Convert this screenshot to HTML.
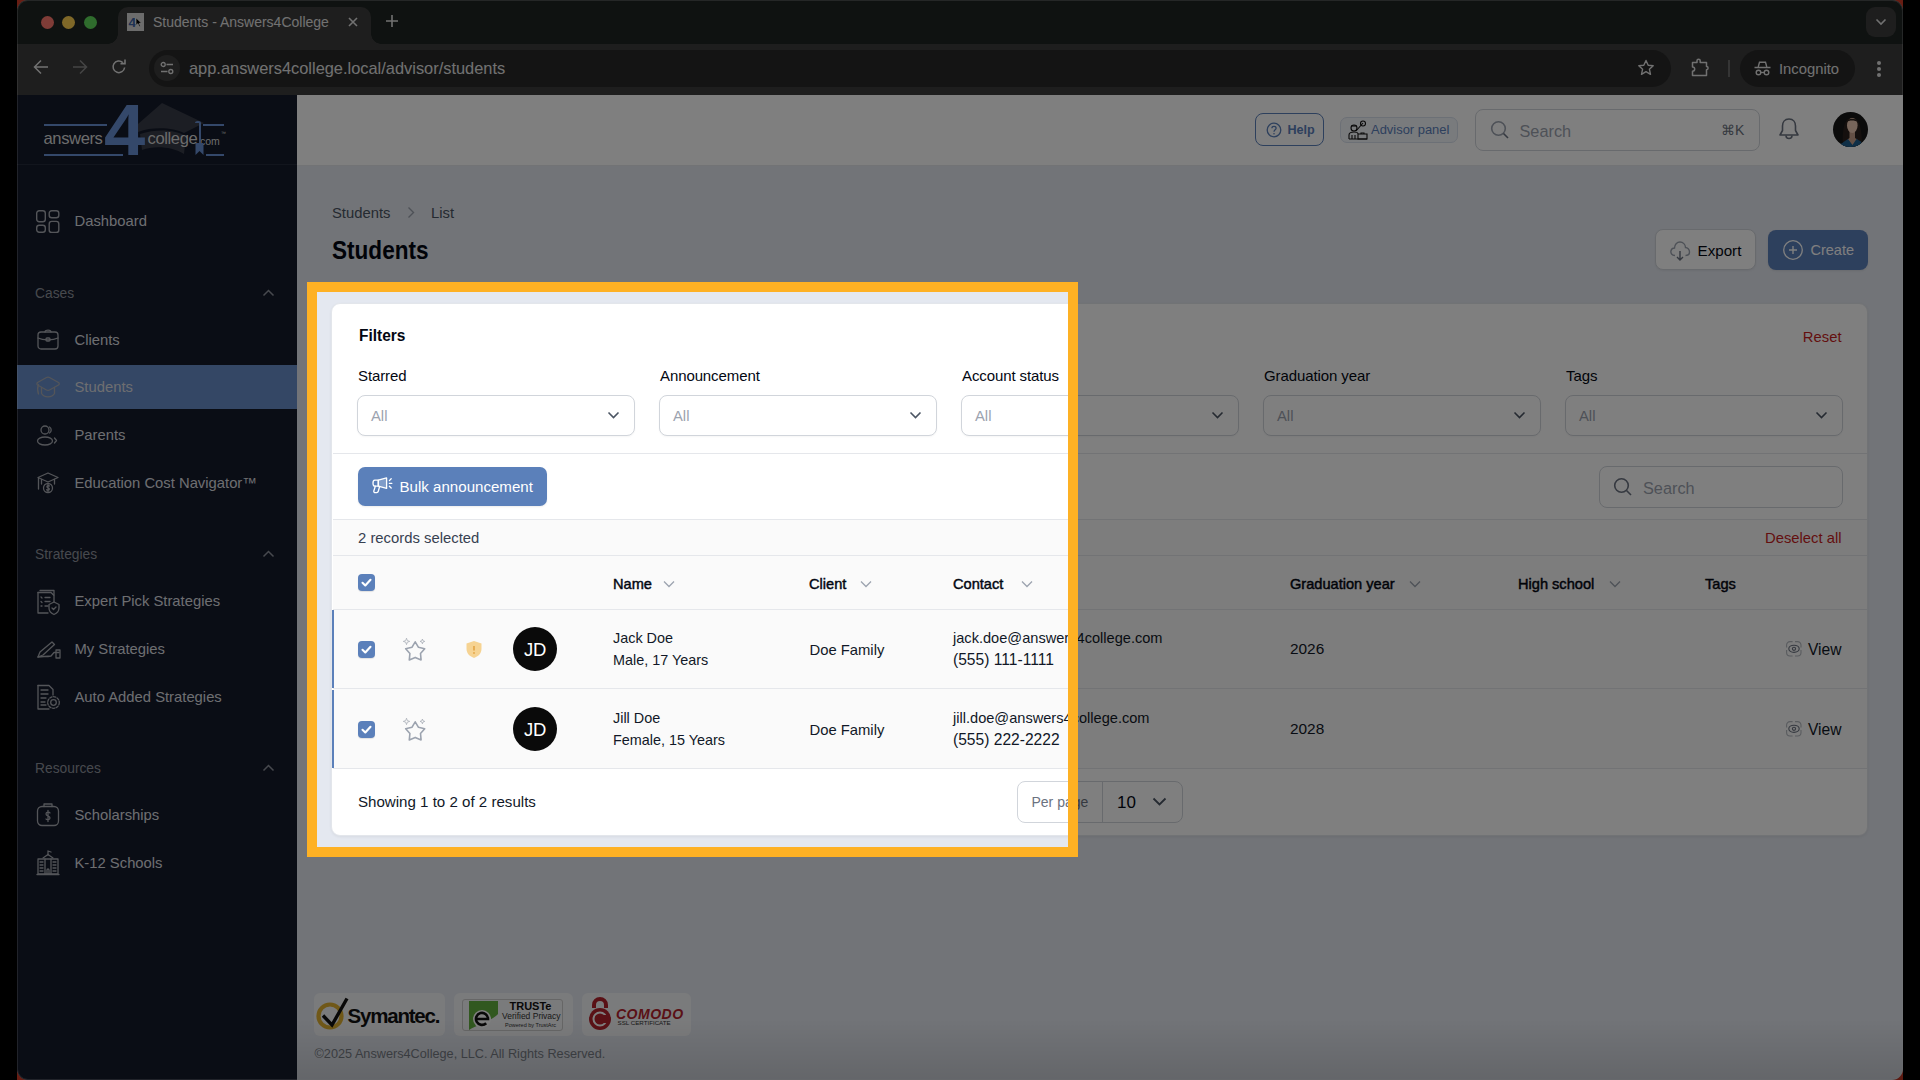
<!DOCTYPE html>
<html><head><meta charset="utf-8">
<style>
*{box-sizing:border-box;margin:0;padding:0}
html,body{width:1920px;height:1080px;overflow:hidden;background:#000;font-family:"Liberation Sans",sans-serif}
.abs{position:absolute}
.t{position:absolute;white-space:nowrap}
#win{position:absolute;left:0;top:0;width:1920px;height:1080px;clip-path:inset(0 17px 0 17px round 11px);background:#e4e8f0}
#tabs{position:absolute;left:0;top:0;width:1920px;height:44px;background:#1e2422}
.tl{position:absolute;top:15.5px;width:13px;height:13px;border-radius:50%}
#tab{position:absolute;left:118px;top:7px;width:253px;height:37px;background:#3c3c3c;border-radius:10px 10px 0 0}
.fl,.fr{position:absolute;bottom:0;width:10px;height:10px}
.fl{left:-10px;background:radial-gradient(circle at 0 0,transparent 9.5px,#3c3c3c 10px)}
.fr{right:-10px;background:radial-gradient(circle at 100% 0,transparent 9.5px,#3c3c3c 10px)}
#toolbar{position:absolute;left:0;top:44px;width:1920px;height:51px;background:#3c3c3c}
#omni{position:absolute;left:149px;top:6px;width:1522px;height:37px;border-radius:18.5px;background:#282828}
.ctext{color:#e3e3e3}
#hole{position:absolute;left:307px;top:282px;width:771px;height:575px;border:10px solid #feb124;box-shadow:0 0 0 3000px rgba(0,0,0,.5);z-index:50}
</style></head><body>
<div class="abs" style="left:17px;top:0;width:12px;height:12px;background:#d03a26"></div>
<div class="abs" style="left:1891px;top:0;width:12px;height:12px;background:#d03a26"></div>
<div class="abs" style="left:17px;top:1068px;width:12px;height:12px;background:#d03a26"></div>
<div class="abs" style="left:1891px;top:1068px;width:12px;height:12px;background:#d03a26"></div>
<div id="win">
<div id="tabs">
  <div class="tl" style="left:40.5px;background:#ff786e"></div>
  <div class="tl" style="left:61.5px;background:#ffd050"></div>
  <div class="tl" style="left:83.5px;background:#5ed85a"></div>
  <div id="tab"><i class="fl"></i><i class="fr"></i>
    <div class="abs" style="left:8.5px;top:6px;width:17.5px;height:18px;background:#d8d8d8"></div>
    <div class="abs" style="left:10.5px;top:8.5px;width:12px;height:14px;font:bold 13.5px 'Liberation Sans';color:#3b62a6;line-height:14px">4</div>
    <svg class="abs" style="left:17px;top:10px" width="8" height="11" viewBox="0 0 8 11"><path d="M1 0.8 L1 8.3 L2.9 6.7 L4.3 9.8 L5.5 9.3 L4.2 6.3 L6.7 6.3 Z" fill="#000" stroke="#fff" stroke-width=".7"/></svg>
    <div class="abs ctext" style="left:35px;top:6px;font-size:14px;line-height:18px;white-space:nowrap">Students - Answers4College</div>
    <svg class="abs" style="left:230px;top:10px" width="10" height="10" viewBox="0 0 10 10"><path d="M1 1L9 9M9 1L1 9" stroke="#e3e3e3" stroke-width="1.6"/></svg>
  </div>
  <svg class="abs" style="left:385px;top:14px" width="14" height="14" viewBox="0 0 14 14"><path d="M7 1V13M1 7H13" stroke="#e3e3e3" stroke-width="1.6"/></svg>
  <div class="abs" style="left:1866px;top:7px;width:30px;height:30px;border-radius:9px;background:#3c3c3c"></div>
  <svg class="abs" style="left:1875px;top:18px" width="12" height="8" viewBox="0 0 12 8"><path d="M1.5 1.5L6 6L10.5 1.5" stroke="#e3e3e3" stroke-width="1.6" fill="none"/></svg>
</div>
<div id="toolbar">
  <svg class="abs" style="left:33px;top:15px" width="16" height="16" viewBox="0 0 16 16"><path d="M15 8H2M8 1.5L1.5 8L8 14.5" stroke="#e3e3e3" stroke-width="1.5" fill="none"/></svg>
  <svg class="abs" style="left:72px;top:15px" width="16" height="16" viewBox="0 0 16 16"><path d="M1 8H14M8 1.5L14.5 8L8 14.5" stroke="#8a8a8a" stroke-width="1.5" fill="none"/></svg>
  <svg class="abs" style="left:111px;top:15px" width="16" height="16" viewBox="0 0 16 16"><path d="M13.6 8.5A5.8 5.8 0 1 1 11.8 3.6" stroke="#e3e3e3" stroke-width="1.5" fill="none"/><path d="M9.5 4.6H14V0.4" stroke="#e3e3e3" stroke-width="1.6" fill="none"/></svg>
  <div id="omni">
    <div class="abs" style="left:5px;top:5px;width:26px;height:26px;border-radius:50%;background:#3c3c3c"></div>
    <svg class="abs" style="left:11px;top:11px" width="14" height="14" viewBox="0 0 14 14"><circle cx="3.2" cy="3.5" r="2" stroke="#e3e3e3" stroke-width="1.3" fill="none"/><path d="M6.5 3.5H13" stroke="#e3e3e3" stroke-width="1.3"/><circle cx="10.8" cy="10.5" r="2" stroke="#e3e3e3" stroke-width="1.3" fill="none"/><path d="M1 10.5H7.5" stroke="#e3e3e3" stroke-width="1.3"/></svg>
    <div class="abs ctext" style="left:40px;top:8px;font-size:16.4px;line-height:20px;white-space:nowrap">app.answers4college.local/advisor/students</div>
    <svg class="abs" style="left:1488px;top:9px" width="18" height="18" viewBox="0 0 18 18"><path d="M9 1.5L11.2 6.3L16.2 6.8L12.4 10.2L13.5 15.3L9 12.7L4.5 15.3L5.6 10.2L1.8 6.8L6.8 6.3Z" stroke="#e3e3e3" stroke-width="1.4" fill="none" stroke-linejoin="round"/></svg>
  </div>
  <svg class="abs" style="left:1691px;top:14px" width="20" height="19" viewBox="0 0 20 19"><path d="M1.5 4.5H6V2.8A1.6 1.6 0 0 1 9.2 2.8V4.5H15.5V8.5A1.6 1.6 0 0 1 15.5 11.7V17.5H1.5V13.3A2.2 2.2 0 0 0 1.5 8.9Z" stroke="#e3e3e3" stroke-width="1.5" fill="none" stroke-linejoin="round"/></svg>
  <div class="abs" style="left:1728px;top:16px;width:1.5px;height:17px;background:#6a6a6a"></div>
  <div class="abs" style="left:1740px;top:6px;width:115px;height:37px;border-radius:19px;background:#282828">
    <svg class="abs" style="left:14px;top:11px" width="17" height="15" viewBox="0 0 17 15"><path d="M4.2 6L5.5 1.2H11.5L12.8 6" stroke="#e3e3e3" stroke-width="1.4" fill="none"/><path d="M0.5 6.5H16.5" stroke="#e3e3e3" stroke-width="1.5"/><circle cx="4.5" cy="11.5" r="2.3" stroke="#e3e3e3" stroke-width="1.4" fill="none"/><circle cx="12.5" cy="11.5" r="2.3" stroke="#e3e3e3" stroke-width="1.4" fill="none"/><path d="M6.8 11.5H10.2" stroke="#e3e3e3" stroke-width="1.3"/></svg>
    <div class="abs ctext" style="left:39px;top:10px;font-size:14.8px;line-height:18px">Incognito</div>
  </div>
  <div class="abs" style="left:1876.5px;top:17px;width:4px;height:4px;border-radius:50%;background:#e3e3e3"></div>
  <div class="abs" style="left:1876.5px;top:22.5px;width:4px;height:4px;border-radius:50%;background:#e3e3e3"></div>
  <div class="abs" style="left:1876.5px;top:28.5px;width:4px;height:4px;border-radius:50%;background:#e3e3e3"></div>
</div>

<div class="abs" style="left:17px;top:95px;width:280px;height:985px;background:#141a2a"></div>
<div class="abs" style="left:17px;top:164px;width:280px;height:1px;background:#252b3a"></div>
<div class="abs" style="left:44px;top:124px;width:63px;height:2px;background:#6890d4"></div>
<div class="abs" style="left:44px;top:154px;width:79px;height:2px;background:#6890d4"></div>
<div class="abs" style="left:203px;top:124px;width:21px;height:2px;background:#6890d4"></div>
<div class="abs" style="left:206px;top:154px;width:18px;height:2px;background:#6890d4"></div>
<svg class="abs" style="left:134px;top:102px;" width="80" height="56" viewBox="0 0 80 56"><path d="M4 22 L28 1 L70 21 L50 31 C40 26 20 24 4 30 Z" fill="#383c48"/><path d="M6 32 C24 26 42 28 52 34 L50 52 C36 44 20 44 8 48 Z" fill="#383c48"/></svg>
<div class="t" style="left:104px;top:89.70px;font-size:72px;line-height:80px;color:#6890d4;font-weight:bold;transform:scaleX(1.03);transform-origin:0 50%">4</div>
<div class="t" style="left:43.5px;top:129.00px;font-size:16.6px;line-height:20px;color:#d8d8d8;font-weight:normal;letter-spacing:-0.4px">answers</div>
<div class="t" style="left:147.5px;top:129.00px;font-size:16.6px;line-height:20px;color:#d8d8d8;font-weight:normal;letter-spacing:-0.4px">college</div>
<div class="t" style="left:197px;top:130.50px;font-size:10.5px;line-height:20px;color:#d8d8d8;font-weight:normal;">.com</div>
<div class="t" style="left:221px;top:123.00px;font-size:5px;line-height:20px;color:#dcdcdc;font-weight:normal;">™</div>
<svg class="abs" style="left:192px;top:120px;" width="14" height="36" viewBox="0 0 14 36"><path d="M4 3 C4 1.5 8 1.5 8 3 V25" stroke="#6890d4" stroke-width="2" fill="none"/><path d="M3.5 23 H11.5 V35 L7.5 31 L3.5 35 Z" fill="#6890d4"/></svg>
<svg class="abs" style="left:35px;top:209px;" width="26" height="26" viewBox="0 0 26 26"><g stroke="#a8abb2" stroke-width="1.4" fill="none"><rect x="1.7" y="1.7" width="8.6" height="11" rx="2.5"/><rect x="14.2" y="1.7" width="9.6" height="7" rx="2.5"/><rect x="1.7" y="16.3" width="8.6" height="7" rx="2.5"/><rect x="14.2" y="12.4" width="9.6" height="11" rx="2.5"/></g></svg>
<div class="t" style="left:74.5px;top:211.30px;font-size:14.8px;line-height:20px;color:#dcdde1;font-weight:normal;">Dashboard</div>
<div class="t" style="left:35px;top:283.50px;font-size:13.8px;line-height:20px;color:#8f939c;font-weight:normal;">Cases</div>
<svg class="abs" style="left:262px;top:288.5px;" width="13" height="8" viewBox="0 0 13 8"><path d="M1.5 6.5L6.5 1.5L11.5 6.5" stroke="#8f939c" stroke-width="1.5" fill="none"/></svg>
<div class="t" style="left:35px;top:545.30px;font-size:13.8px;line-height:20px;color:#8f939c;font-weight:normal;">Strategies</div>
<svg class="abs" style="left:262px;top:550.3px;" width="13" height="8" viewBox="0 0 13 8"><path d="M1.5 6.5L6.5 1.5L11.5 6.5" stroke="#8f939c" stroke-width="1.5" fill="none"/></svg>
<div class="t" style="left:35px;top:759.00px;font-size:13.8px;line-height:20px;color:#8f939c;font-weight:normal;">Resources</div>
<svg class="abs" style="left:262px;top:764px;" width="13" height="8" viewBox="0 0 13 8"><path d="M1.5 6.5L6.5 1.5L11.5 6.5" stroke="#8f939c" stroke-width="1.5" fill="none"/></svg>
<div class="abs" style="left:17px;top:365px;width:280px;height:44px;background:#688eca"></div>
<div class="t" style="left:74.5px;top:329.60px;font-size:14.8px;line-height:20px;color:#dcdde1;font-weight:normal;">Clients</div>
<svg class="abs" style="left:36px;top:327px;" width="26" height="27" viewBox="0 0 26 27"><g stroke="#a8abb2" stroke-width="1.3" fill="none" stroke-linecap="round" stroke-linejoin="round"><path d="M9 5 C9 2.5 15 2.5 15 5"/><rect x="2" y="5" width="20" height="17" rx="3"/><path d="M2 11 C7 13.5 17 13.5 22 11"/><rect x="10" y="11" width="4" height="3" rx="1"/></g></svg>
<div class="t" style="left:74.5px;top:377.20px;font-size:14.8px;line-height:20px;color:#dcdde1;font-weight:normal;">Students</div>
<svg class="abs" style="left:36px;top:375px;" width="26" height="27" viewBox="0 0 26 27"><g stroke="#a8abb2" stroke-width="1.3" fill="none" stroke-linecap="round" stroke-linejoin="round"><path d="M10.5 2.5 C11.5 2 12.5 2 13.5 2.5 L22.5 7.5 C23.5 8.2 23.5 9.3 22.5 10 L13.5 15 C12.5 15.5 11.5 15.5 10.5 15 L1.5 10 C0.8 9.5 0.8 8.2 1.5 7.5 Z"/><path d="M5.5 12.5 V18.5 C8 23 16 23 18.5 18.5 V12.5"/><path d="M2.5 9.5 C1.5 12 1.5 16 2.5 19"/></g></svg>
<div class="t" style="left:74.5px;top:425.30px;font-size:14.8px;line-height:20px;color:#dcdde1;font-weight:normal;">Parents</div>
<svg class="abs" style="left:36px;top:423px;" width="26" height="27" viewBox="0 0 26 27"><g stroke="#a8abb2" stroke-width="1.3" fill="none" stroke-linecap="round" stroke-linejoin="round"><circle cx="9" cy="7" r="4"/><path d="M13.5 4 A3.5 3.5 0 0 1 13.5 10"/><ellipse cx="9" cy="18" rx="7.5" ry="4"/><path d="M18.5 15 L20.5 17.5 L18.5 20"/></g></svg>
<div class="t" style="left:74.5px;top:473.40px;font-size:14.8px;line-height:20px;color:#dcdde1;font-weight:normal;">Education Cost Navigator™</div>
<svg class="abs" style="left:36px;top:471px;" width="26" height="27" viewBox="0 0 26 27"><g stroke="#a8abb2" stroke-width="1.3" fill="none" stroke-linecap="round" stroke-linejoin="round"><path d="M12 2 L22 6.5 L12 11 L2 6.5 Z"/><path d="M5.5 8.5 V13 M18.5 8.5 V13"/><circle cx="12" cy="17" r="4.5"/><path d="M2.5 7 V18"/><path d="M13.3 15 C12.5 14 10.7 14.5 10.9 15.8 C11.1 17 13.3 16.6 13.4 18 C13.4 19.5 11.2 19.7 10.6 18.7 M12 13.5V20.5"/></g></svg>
<div class="t" style="left:74.5px;top:591.40px;font-size:14.8px;line-height:20px;color:#dcdde1;font-weight:normal;">Expert Pick Strategies</div>
<svg class="abs" style="left:36px;top:589px;" width="26" height="27" viewBox="0 0 26 27"><g stroke="#a8abb2" stroke-width="1.3" fill="none" stroke-linecap="round" stroke-linejoin="round"><path d="M4 1.5 H18 V6"/><path d="M2 3.5 H15 L18 6.5 V13"/><path d="M2 3.5 V24 H12"/><path d="M5 8 L6 9 M9 8.5 H14 M5 12.5 L6 13.5 M9 12.5 H14 M5 17 L6 17 M9 17 H12"/><path d="M18 13 L23 15.5 V19 C23 22 20.5 24.5 18 25.5 C15.5 24.5 13 22 13 19 V15.5 Z"/><path d="M16 19 L17.5 20.5 L20 18"/></g></svg>
<div class="t" style="left:74.5px;top:639.10px;font-size:14.8px;line-height:20px;color:#dcdde1;font-weight:normal;">My Strategies</div>
<svg class="abs" style="left:36px;top:637px;" width="26" height="27" viewBox="0 0 26 27"><g stroke="#a8abb2" stroke-width="1.3" fill="none" stroke-linecap="round" stroke-linejoin="round"><path d="M2 20 L4 15 L16 5 L18.5 7.5 L7 18 Z"/><path d="M2 20 C6 19 10 20 15 19 L18 15.5 H23"/><rect x="20" y="13" width="4" height="8"/></g></svg>
<div class="t" style="left:74.5px;top:686.90px;font-size:14.8px;line-height:20px;color:#dcdde1;font-weight:normal;">Auto Added Strategies</div>
<svg class="abs" style="left:36px;top:684px;" width="26" height="27" viewBox="0 0 26 27"><g stroke="#a8abb2" stroke-width="1.3" fill="none" stroke-linecap="round" stroke-linejoin="round"><path d="M2 1.5 H13 L17 5.5 V11"/><path d="M2 1.5 V25 H13"/><path d="M5 6 H12 M5 10 H12 M5 14 H10 M5 18 H9 M5 21 H10"/><circle cx="17.5" cy="18.5" r="2.8"/><circle cx="17.5" cy="18.5" r="5.8" stroke-dasharray="2.3 1.5"/></g></svg>
<div class="t" style="left:74.5px;top:805.00px;font-size:14.8px;line-height:20px;color:#dcdde1;font-weight:normal;">Scholarships</div>
<svg class="abs" style="left:36px;top:802px;" width="26" height="27" viewBox="0 0 26 27"><g stroke="#a8abb2" stroke-width="1.3" fill="none" stroke-linecap="round" stroke-linejoin="round"><path d="M8 4.5 V2 H16 V4.5"/><rect x="1.5" y="4.5" width="21" height="19" rx="4.5"/><path d="M14 11 C13.5 9.8 10 9.5 10 12 C10 14.5 14 13.5 14 16 C14 18 10.5 18 10 17 M12 8.5 V19.5"/></g></svg>
<div class="t" style="left:74.5px;top:852.80px;font-size:14.8px;line-height:20px;color:#dcdde1;font-weight:normal;">K-12 Schools</div>
<svg class="abs" style="left:36px;top:850px;" width="26" height="27" viewBox="0 0 26 27"><g stroke="#a8abb2" stroke-width="1.3" fill="none" stroke-linecap="round" stroke-linejoin="round"><path d="M12 1 V5 M12 1 L15 2"/><path d="M7 8 L12 4.5 L17 8"/><path d="M2 9 H22 V24 H2 Z"/><path d="M9 9 V24 M15 9 V24"/><path d="M11 24 V20 A1 1 0 0 1 13 20 V24"/><path d="M4 12 H7 M4 15 H7 M4 18 H7 M4 21 H7 M17 12 H20 M17 15 H20 M17 18 H20 M17 21 H20"/><path d="M1 24.5 H23"/></g></svg>
<div class="abs" style="left:297px;top:95px;width:1606px;height:70px;background:#fff"></div>
<div class="abs" style="left:297px;top:165px;width:1606px;height:1px;background:#e5e7eb"></div>
<div class="abs" style="left:1255px;top:113px;width:69px;height:33px;border:1.5px solid #5b80ba;border-radius:8px"></div>
<svg class="abs" style="left:1266px;top:122px;" width="16" height="16" viewBox="0 0 16 16"><circle cx="8" cy="8" r="6.8" stroke="#5b80ba" stroke-width="1.3" fill="none"/><path d="M5.9 6.2 C5.9 3.8 10.1 3.8 10.1 6.2 C10.1 7.8 8 7.8 8 9.7" stroke="#5b80ba" stroke-width="1.3" fill="none"/><circle cx="8" cy="11.8" r=".8" fill="#5b80ba"/></svg>
<div class="t" style="left:1287.5px;top:120.00px;font-size:12.6px;line-height:20px;color:#5b80ba;font-weight:bold;">Help</div>
<div class="abs" style="left:1340px;top:117px;width:118px;height:26px;background:#f3f6fb;border:1px solid #d8e0ec;border-radius:7px"></div>
<svg class="abs" style="left:1348px;top:120px;" width="20" height="20" viewBox="0 0 20 20"><g stroke="#111" stroke-width="1.1" fill="none"><circle cx="6" cy="8" r="3"/><path d="M3 6 H9"/><path d="M1 19 V15 C1 13 3 12 6 12 C9 12 10 13 10 14"/><path d="M10 14 V19 H19 V14 H10"/><path d="M13 14 V13 H16 V14"/><path d="M8 11 L15 3"/><circle cx="15" cy="3.5" r="2.5"/><path d="M1 19 H19 M4 15 V19 M7 15 V19"/></g></svg>
<div class="t" style="left:1371px;top:120.00px;font-size:12.95px;line-height:20px;color:#5b80ba;font-weight:normal;">Advisor panel</div>
<div class="abs" style="left:1475px;top:109px;width:285px;height:42px;border:1px solid #d1d5db;border-radius:8px;background:#fff"></div>
<svg class="abs" style="left:1490px;top:120px;" width="20" height="20" viewBox="0 0 20 20"><circle cx="8.5" cy="8.5" r="6.8" stroke="#9ca3af" stroke-width="1.6" fill="none"/><path d="M13.5 13.5 L18 18" stroke="#6b7280" stroke-width="1.6"/></svg>
<div class="t" style="left:1519.5px;top:120.50px;font-size:16.3px;line-height:20px;color:#9ca3af;font-weight:normal;">Search</div>
<div class="t" style="left:1721px;top:120.00px;font-size:14px;line-height:20px;color:#6b7280;font-weight:normal;">⌘K</div>
<svg class="abs" style="left:1778px;top:117px;" width="22" height="25" viewBox="0 0 22 25"><path d="M11 2 C6.5 2 4.5 5.5 4.5 9 V13.5 L2 18 H20 L17.5 13.5 V9 C17.5 5.5 15.5 2 11 2 Z" stroke="#6b7280" stroke-width="1.6" fill="none" stroke-linejoin="round"/><path d="M8 18.5 C8 22.5 14 22.5 14 18.5" stroke="#6b7280" stroke-width="1.6" fill="none"/></svg>
<div class="abs" style="left:1832.5px;top:111.5px;width:35.5px;height:35.5px;border-radius:50%;overflow:hidden;background:#161616"><svg width="36" height="36" viewBox="0 0 36 36"><path d="M10 36 C9 22 10 6 19 5.5 C28 6 29 22 29 36 Z" fill="#2b211c"/><path d="M16.5 19 H22 V26 L24.5 27.5 L19.5 34 L14.5 27.5 L16.5 26 Z" fill="#c9a08a"/><ellipse cx="19.3" cy="13.5" rx="5.3" ry="7.6" fill="#eecab4"/><path d="M13.5 10 C14 5.5 24.5 5.5 25 10 C22 8 16 8 13.5 10Z" fill="#2b211c"/><path d="M9 36 L10.5 30 L15 27 L19.5 33 L23.5 27 L28 29.5 L31 36 Z" fill="#1f5e8e"/><path d="M6 33 L11 30 L12 36 H6Z M31 30 L34 29 L33 36 H30Z" fill="#1f5e8e"/></svg></div>
<div class="t" style="left:332px;top:202.50px;font-size:14.8px;line-height:20px;color:#4b5563;font-weight:normal;">Students</div>
<svg class="abs" style="left:406px;top:206px;" width="10" height="13" viewBox="0 0 10 13"><path d="M2.5 1.5 L7.5 6.5 L2.5 11.5" stroke="#9ca3af" stroke-width="1.4" fill="none"/></svg>
<div class="t" style="left:431px;top:202.50px;font-size:14.8px;line-height:20px;color:#4b5563;font-weight:normal;">List</div>
<div class="t" style="left:332px;top:235.00px;font-size:26.5px;line-height:30px;color:#030712;font-weight:bold;transform:scaleX(0.852);transform-origin:0 50%">Students</div>
<div class="abs" style="left:1655px;top:229px;width:101px;height:41px;background:#fff;border:1px solid #d1d5db;border-radius:8px;box-shadow:0 1px 2px rgba(0,0,0,.05)"></div>
<svg class="abs" style="left:1669px;top:240px;" width="22" height="22" viewBox="0 0 22 22"><path d="M6 15.5 C2.5 15.5 1.5 12.5 2 10.8 C2.5 9 4 8 5.5 8 C5.5 4.5 8 2 11 2 C14 2 16.5 4.5 16.5 7.5 C18.5 7.5 20.5 9.5 20.5 12 C20.5 14 19 15.5 16.5 15.5" stroke="#9ca3af" stroke-width="1.4" fill="none"/><path d="M11 11 V20 M8 17 L11 20 L14 17" stroke="#6b7280" stroke-width="1.4" fill="none"/></svg>
<div class="t" style="left:1697.5px;top:240.50px;font-size:15.2px;line-height:20px;color:#030712;font-weight:normal;">Export</div>
<div class="abs" style="left:1768px;top:230px;width:100px;height:40px;background:#5b80ba;border-radius:8px;box-shadow:0 1px 2px rgba(0,0,0,.08)"></div>
<svg class="abs" style="left:1782px;top:239px;" width="22" height="22" viewBox="0 0 22 22"><circle cx="11" cy="11" r="9.3" stroke="#fff" stroke-width="1.3" fill="none"/><path d="M11 7 V15 M7 11 H15" stroke="#fff" stroke-width="1.4"/></svg>
<div class="t" style="left:1810.5px;top:240.00px;font-size:14.5px;line-height:20px;color:#fff;font-weight:normal;">Create</div>
<div class="abs" style="left:331px;top:303px;width:1537px;height:533px;background:#fff;border:1px solid #e3e6eb;border-radius:9px;box-shadow:0 1px 3px rgba(0,0,0,.06)"></div>
<div class="t" style="left:358.5px;top:325.20px;font-size:17.2px;line-height:20px;color:#030712;font-weight:bold;transform:scaleX(0.9);transform-origin:0 50%">Filters</div>
<div class="t" style="right:78.5px;top:326.50px;font-size:14.8px;line-height:20px;color:#c81e1e;font-weight:normal;">Reset</div>
<div class="t" style="left:358px;top:366.40px;font-size:15.0px;line-height:20px;color:#030712;font-weight:normal;letter-spacing:-0.1px">Starred</div>
<div class="abs" style="left:357px;top:395px;width:278px;height:41px;background:#fff;border:1px solid #d1d5db;border-radius:8px;box-shadow:0 1px 2px rgba(0,0,0,.04)"></div>
<div class="t" style="left:371px;top:406.20px;font-size:14.8px;line-height:20px;color:#9ca3af;font-weight:normal;">All</div>
<svg class="abs" style="left:607px;top:411px;" width="13" height="9" viewBox="0 0 13 9"><path d="M1.5 1.5 L6.5 6.5 L11.5 1.5" stroke="#4b5563" stroke-width="1.6" fill="none"/></svg>
<div class="t" style="left:660px;top:366.40px;font-size:15.0px;line-height:20px;color:#030712;font-weight:normal;letter-spacing:-0.1px">Announcement</div>
<div class="abs" style="left:659px;top:395px;width:278px;height:41px;background:#fff;border:1px solid #d1d5db;border-radius:8px;box-shadow:0 1px 2px rgba(0,0,0,.04)"></div>
<div class="t" style="left:673px;top:406.20px;font-size:14.8px;line-height:20px;color:#9ca3af;font-weight:normal;">All</div>
<svg class="abs" style="left:909px;top:411px;" width="13" height="9" viewBox="0 0 13 9"><path d="M1.5 1.5 L6.5 6.5 L11.5 1.5" stroke="#4b5563" stroke-width="1.6" fill="none"/></svg>
<div class="t" style="left:962px;top:366.40px;font-size:15.0px;line-height:20px;color:#030712;font-weight:normal;letter-spacing:-0.1px">Account status</div>
<div class="abs" style="left:961px;top:395px;width:278px;height:41px;background:#fff;border:1px solid #d1d5db;border-radius:8px;box-shadow:0 1px 2px rgba(0,0,0,.04)"></div>
<div class="t" style="left:975px;top:406.20px;font-size:14.8px;line-height:20px;color:#9ca3af;font-weight:normal;">All</div>
<svg class="abs" style="left:1211px;top:411px;" width="13" height="9" viewBox="0 0 13 9"><path d="M1.5 1.5 L6.5 6.5 L11.5 1.5" stroke="#4b5563" stroke-width="1.6" fill="none"/></svg>
<div class="t" style="left:1264px;top:366.40px;font-size:15.0px;line-height:20px;color:#030712;font-weight:normal;letter-spacing:-0.1px">Graduation year</div>
<div class="abs" style="left:1263px;top:395px;width:278px;height:41px;background:#fff;border:1px solid #d1d5db;border-radius:8px;box-shadow:0 1px 2px rgba(0,0,0,.04)"></div>
<div class="t" style="left:1277px;top:406.20px;font-size:14.8px;line-height:20px;color:#9ca3af;font-weight:normal;">All</div>
<svg class="abs" style="left:1513px;top:411px;" width="13" height="9" viewBox="0 0 13 9"><path d="M1.5 1.5 L6.5 6.5 L11.5 1.5" stroke="#4b5563" stroke-width="1.6" fill="none"/></svg>
<div class="t" style="left:1566px;top:366.40px;font-size:15.0px;line-height:20px;color:#030712;font-weight:normal;letter-spacing:-0.1px">Tags</div>
<div class="abs" style="left:1565px;top:395px;width:278px;height:41px;background:#fff;border:1px solid #d1d5db;border-radius:8px;box-shadow:0 1px 2px rgba(0,0,0,.04)"></div>
<div class="t" style="left:1579px;top:406.20px;font-size:14.8px;line-height:20px;color:#9ca3af;font-weight:normal;">All</div>
<svg class="abs" style="left:1815px;top:411px;" width="13" height="9" viewBox="0 0 13 9"><path d="M1.5 1.5 L6.5 6.5 L11.5 1.5" stroke="#4b5563" stroke-width="1.6" fill="none"/></svg>
<div class="abs" style="left:333px;top:453px;width:1534px;height:1px;background:#e5e7eb"></div>
<div class="abs" style="left:358px;top:467px;width:189px;height:39px;background:#5b80ba;border-radius:7px;box-shadow:0 1px 2px rgba(0,0,0,.08)"></div>
<svg class="abs" style="left:371px;top:476px;" width="22" height="19" viewBox="0 0 22 19"><g stroke="#fff" stroke-width="1.3" fill="none" stroke-linejoin="round" stroke-linecap="round"><path d="M7.3 4.2 L15.6 1.9 V12.4 L7.3 10.2 Z" fill="rgba(255,255,255,.22)"/><path d="M7.3 4.2 H4 C2.2 4.2 2 5.5 2 7.2 C2 8.9 2.2 10.2 4 10.2 H7.3 Z"/><path d="M4.3 10.2 L2.8 15 C2.6 16 3.3 16.6 4.3 16.6 H5.8 C6.6 16.6 7.1 16 7.3 15.3 L8.6 10.5"/><path d="M18.4 4.6 L20.2 2.8 M18.4 7.4 H20.8 M18.4 10.2 L20.2 12"/></g></svg>
<div class="t" style="left:399.5px;top:477.20px;font-size:15.1px;line-height:20px;color:#fff;font-weight:normal;">Bulk announcement</div>
<div class="abs" style="left:1599px;top:466px;width:244px;height:42px;background:#fff;border:1px solid #d1d5db;border-radius:8px"></div>
<svg class="abs" style="left:1613px;top:477px;" width="20" height="20" viewBox="0 0 20 20"><circle cx="8.5" cy="8.5" r="6.8" stroke="#6b7280" stroke-width="1.6" fill="none"/><path d="M13.5 13.5 L18 18" stroke="#6b7280" stroke-width="1.6"/></svg>
<div class="t" style="left:1643px;top:477.50px;font-size:16.3px;line-height:20px;color:#9ca3af;font-weight:normal;">Search</div>
<div class="abs" style="left:333px;top:519px;width:1534px;height:1px;background:#e5e7eb"></div>
<div class="abs" style="left:333px;top:520px;width:1534px;height:248px;background:#fafafa"></div>
<div class="t" style="left:358px;top:527.70px;font-size:14.85px;line-height:20px;color:#374151;font-weight:normal;">2 records selected</div>
<div class="t" style="right:78.5px;top:528.00px;font-size:14.8px;line-height:20px;color:#c81e1e;font-weight:normal;">Deselect all</div>
<div class="abs" style="left:333px;top:555px;width:1534px;height:1px;background:#e5e7eb"></div>
<div class="abs" style="left:358px;top:574px;width:17px;height:17px;background:#5b80ba;border-radius:4px;box-shadow:0 1px 1px rgba(0,0,0,.1)"></div>
<svg class="abs" style="left:358px;top:574px;" width="17" height="17" viewBox="0 0 17 17"><path d="M4.5 8.8 L7.3 11.5 L12.5 5.8" stroke="#fff" stroke-width="2.1" fill="none" stroke-linecap="round" stroke-linejoin="round"/></svg>
<div class="t" style="left:613px;top:573.60px;font-size:14.6px;line-height:20px;color:#030712;font-weight:normal;-webkit-text-stroke:0.45px #030712">Name</div>
<svg class="abs" style="left:662.5px;top:579.6px;" width="12" height="8" viewBox="0 0 12 8"><path d="M1 1.5 L6 6.5 L11 1.5" stroke="#9ca3af" stroke-width="1.3" fill="none"/></svg>
<div class="t" style="left:809px;top:573.60px;font-size:14.6px;line-height:20px;color:#030712;font-weight:normal;-webkit-text-stroke:0.45px #030712">Client</div>
<svg class="abs" style="left:859.5px;top:579.6px;" width="12" height="8" viewBox="0 0 12 8"><path d="M1 1.5 L6 6.5 L11 1.5" stroke="#9ca3af" stroke-width="1.3" fill="none"/></svg>
<div class="t" style="left:953px;top:573.60px;font-size:14.6px;line-height:20px;color:#030712;font-weight:normal;-webkit-text-stroke:0.45px #030712">Contact</div>
<svg class="abs" style="left:1020.5px;top:579.6px;" width="12" height="8" viewBox="0 0 12 8"><path d="M1 1.5 L6 6.5 L11 1.5" stroke="#9ca3af" stroke-width="1.3" fill="none"/></svg>
<div class="t" style="left:1290px;top:573.60px;font-size:14.6px;line-height:20px;color:#030712;font-weight:normal;-webkit-text-stroke:0.45px #030712">Graduation year</div>
<svg class="abs" style="left:1408.5px;top:579.6px;" width="12" height="8" viewBox="0 0 12 8"><path d="M1 1.5 L6 6.5 L11 1.5" stroke="#9ca3af" stroke-width="1.3" fill="none"/></svg>
<div class="t" style="left:1518px;top:573.60px;font-size:14.6px;line-height:20px;color:#030712;font-weight:normal;-webkit-text-stroke:0.45px #030712">High school</div>
<svg class="abs" style="left:1608.5px;top:579.6px;" width="12" height="8" viewBox="0 0 12 8"><path d="M1 1.5 L6 6.5 L11 1.5" stroke="#9ca3af" stroke-width="1.3" fill="none"/></svg>
<div class="t" style="left:1705px;top:573.60px;font-size:14.6px;line-height:20px;color:#030712;font-weight:normal;-webkit-text-stroke:0.45px #030712">Tags</div>
<div class="abs" style="left:333px;top:609px;width:1534px;height:1px;background:#e5e7eb"></div>
<div class="abs" style="left:332px;top:610px;width:2px;height:78px;background:#5b80ba"></div>
<div class="abs" style="left:358px;top:640.5px;width:17px;height:17.0px;background:#5b80ba;border-radius:4px;box-shadow:0 1px 1px rgba(0,0,0,.1)"></div>
<svg class="abs" style="left:358px;top:640.5px;" width="17" height="17" viewBox="0 0 17 17"><path d="M4.5 8.8 L7.3 11.5 L12.5 5.8" stroke="#fff" stroke-width="2.1" fill="none" stroke-linecap="round" stroke-linejoin="round"/></svg>
<svg class="abs" style="left:402px;top:637px;" width="26" height="26" viewBox="0 0 26 26"><path d="M13.2 4.8 L16.5 10.3 L22.7 11.7 L18.5 16.5 L19.1 22.9 L13.2 20.4 L7.3 22.9 L7.9 16.5 L3.7 11.7 L9.9 10.3 Z" stroke="#9ca3af" stroke-width="1.6" fill="none" stroke-linejoin="round"/><path d="M4.5 1.2000000000000002 Q4.5 4.4 7.7 4.4 Q4.5 4.4 4.5 7.6000000000000005 Q4.5 4.4 1.2999999999999998 4.4 Q4.5 4.4 4.5 1.2000000000000002 Z M20.4 2.0000000000000004 Q20.4 4.4 22.799999999999997 4.4 Q20.4 4.4 20.4 6.800000000000001 Q20.4 4.4 18.0 4.4 Q20.4 4.4 20.4 2.0000000000000004 Z" stroke="#a9afb8" stroke-width="0.8" fill="none" stroke-linejoin="round"/></svg>
<svg class="abs" style="left:465px;top:639.5px;" width="18" height="19" viewBox="0 0 18 19"><path d="M9 1 L16.5 3.5 V9 C16.5 13.5 13 16.5 9 18 C5 16.5 1.5 13.5 1.5 9 V3.5 Z" fill="#f6d392"/><path d="M9 6 V10.5" stroke="#e4a443" stroke-width="1.6"/><circle cx="9" cy="13" r=".9" fill="#e4a443"/></svg>
<div class="abs" style="left:513px;top:627px;width:44px;height:44px;border-radius:50%;background:#0a0a0a"></div>
<div class="abs" style="left:513px;top:627px;width:44px;height:44px;line-height:45px;text-align:center;color:#fff;font-size:18.5px;letter-spacing:-0.4px">JD</div>
<div class="t" style="left:613px;top:628.30px;font-size:14.4px;line-height:20px;color:#111827;font-weight:normal;">Jack Doe</div>
<div class="t" style="left:613px;top:650.20px;font-size:14.4px;line-height:20px;color:#111827;font-weight:normal;">Male, 17 Years</div>
<div class="t" style="left:809.5px;top:639.50px;font-size:14.8px;line-height:20px;color:#111827;font-weight:normal;">Doe Family</div>
<div class="t" style="left:953px;top:628.30px;font-size:14.6px;line-height:20px;color:#111827;font-weight:normal;">jack.doe@answers4college.com</div>
<div class="t" style="left:953px;top:650.20px;font-size:15.6px;line-height:20px;color:#111827;font-weight:normal;">(555) 111-1111</div>
<div class="t" style="left:1290px;top:639.30px;font-size:15.4px;line-height:20px;color:#111827;font-weight:normal;">2026</div>
<svg class="abs" style="left:1786px;top:641px;" width="16" height="16" viewBox="0 0 16 16"><path d="M0.6 6.6 V4 A3.4 3.4 0 0 1 4 0.6 H6.6 M9 0.6 H11.6 A3.4 3.4 0 0 1 15 4 V6.6 M15 9 V11.6 A3.4 3.4 0 0 1 11.6 15 H9 M6.6 15 H4 A3.4 3.4 0 0 1 0.6 11.6 V9" stroke="#b4b8bf" stroke-width="1.1" fill="none"/><ellipse cx="8" cy="7.8" rx="5.2" ry="3.6" stroke="#6b7280" stroke-width="1.1" fill="none"/><circle cx="8" cy="7.8" r="1.6" stroke="#6b7280" stroke-width="1.1" fill="none"/></svg>
<div class="t" style="right:78.5px;top:639.50px;font-size:15.6px;line-height:20px;color:#111827;font-weight:normal;">View</div>
<div class="abs" style="left:333px;top:688px;width:1534px;height:1px;background:#e5e7eb"></div>
<div class="abs" style="left:332px;top:690px;width:2px;height:78px;background:#5b80ba"></div>
<div class="abs" style="left:358px;top:720.5px;width:17px;height:17.0px;background:#5b80ba;border-radius:4px;box-shadow:0 1px 1px rgba(0,0,0,.1)"></div>
<svg class="abs" style="left:358px;top:720.5px;" width="17" height="17" viewBox="0 0 17 17"><path d="M4.5 8.8 L7.3 11.5 L12.5 5.8" stroke="#fff" stroke-width="2.1" fill="none" stroke-linecap="round" stroke-linejoin="round"/></svg>
<svg class="abs" style="left:402px;top:717px;" width="26" height="26" viewBox="0 0 26 26"><path d="M13.2 4.8 L16.5 10.3 L22.7 11.7 L18.5 16.5 L19.1 22.9 L13.2 20.4 L7.3 22.9 L7.9 16.5 L3.7 11.7 L9.9 10.3 Z" stroke="#9ca3af" stroke-width="1.6" fill="none" stroke-linejoin="round"/><path d="M4.5 1.2000000000000002 Q4.5 4.4 7.7 4.4 Q4.5 4.4 4.5 7.6000000000000005 Q4.5 4.4 1.2999999999999998 4.4 Q4.5 4.4 4.5 1.2000000000000002 Z M20.4 2.0000000000000004 Q20.4 4.4 22.799999999999997 4.4 Q20.4 4.4 20.4 6.800000000000001 Q20.4 4.4 18.0 4.4 Q20.4 4.4 20.4 2.0000000000000004 Z" stroke="#a9afb8" stroke-width="0.8" fill="none" stroke-linejoin="round"/></svg>
<div class="abs" style="left:513px;top:707px;width:44px;height:44px;border-radius:50%;background:#0a0a0a"></div>
<div class="abs" style="left:513px;top:707px;width:44px;height:44px;line-height:45px;text-align:center;color:#fff;font-size:18.5px;letter-spacing:-0.4px">JD</div>
<div class="t" style="left:613px;top:708.30px;font-size:14.4px;line-height:20px;color:#111827;font-weight:normal;">Jill Doe</div>
<div class="t" style="left:613px;top:730.20px;font-size:14.4px;line-height:20px;color:#111827;font-weight:normal;">Female, 15 Years</div>
<div class="t" style="left:809.5px;top:719.50px;font-size:14.8px;line-height:20px;color:#111827;font-weight:normal;">Doe Family</div>
<div class="t" style="left:953px;top:708.30px;font-size:14.6px;line-height:20px;color:#111827;font-weight:normal;">jill.doe@answers4college.com</div>
<div class="t" style="left:953px;top:730.20px;font-size:15.6px;line-height:20px;color:#111827;font-weight:normal;">(555) 222-2222</div>
<div class="t" style="left:1290px;top:719.30px;font-size:15.4px;line-height:20px;color:#111827;font-weight:normal;">2028</div>
<svg class="abs" style="left:1786px;top:721px;" width="16" height="16" viewBox="0 0 16 16"><path d="M0.6 6.6 V4 A3.4 3.4 0 0 1 4 0.6 H6.6 M9 0.6 H11.6 A3.4 3.4 0 0 1 15 4 V6.6 M15 9 V11.6 A3.4 3.4 0 0 1 11.6 15 H9 M6.6 15 H4 A3.4 3.4 0 0 1 0.6 11.6 V9" stroke="#b4b8bf" stroke-width="1.1" fill="none"/><ellipse cx="8" cy="7.8" rx="5.2" ry="3.6" stroke="#6b7280" stroke-width="1.1" fill="none"/><circle cx="8" cy="7.8" r="1.6" stroke="#6b7280" stroke-width="1.1" fill="none"/></svg>
<div class="t" style="right:78.5px;top:719.50px;font-size:15.6px;line-height:20px;color:#111827;font-weight:normal;">View</div>
<div class="abs" style="left:333px;top:768px;width:1534px;height:1px;background:#e5e7eb"></div>
<div class="t" style="left:358px;top:791.50px;font-size:15.1px;line-height:20px;color:#111827;font-weight:normal;">Showing 1 to 2 of 2 results</div>
<div class="abs" style="left:1017px;top:781px;width:166px;height:42px;background:#fff;border:1px solid #d1d5db;border-radius:8px"></div>
<div class="abs" style="left:1102px;top:782px;width:1px;height:40px;background:#d1d5db"></div>
<div class="t" style="left:1031.5px;top:791.50px;font-size:14.0px;line-height:20px;color:#6b7280;font-weight:normal;">Per page</div>
<div class="t" style="left:1117px;top:792.50px;font-size:17px;line-height:20px;color:#030712;font-weight:normal;">10</div>
<svg class="abs" style="left:1152px;top:797px;" width="15" height="10" viewBox="0 0 15 10"><path d="M1.5 1.5 L7.5 7.5 L13.5 1.5" stroke="#4b5563" stroke-width="1.8" fill="none"/></svg>
<div class="abs" style="left:314px;top:993px;width:131px;height:43px;background:#f5f6f8;border-radius:6px"></div>
<div class="abs" style="left:454px;top:993px;width:119px;height:43px;background:#f5f6f8;border-radius:6px"></div>
<div class="abs" style="left:582px;top:993px;width:109px;height:43px;background:#f5f6f8;border-radius:6px"></div>
<svg class="abs" style="left:314px;top:997px;" width="40" height="36" viewBox="0 0 40 36"><circle cx="16" cy="19" r="11.5" stroke="#e0b030" stroke-width="4.2" fill="none"/><path d="M9 18.5 L18 28 L33 1.5" stroke="#111" stroke-width="3.4" fill="none" stroke-linejoin="miter"/></svg>
<div class="t" style="left:347.5px;top:1003.00px;font-size:20.5px;line-height:26px;color:#111;font-weight:bold;letter-spacing:-1.2px">Symantec.</div>
<div class="abs" style="left:462px;top:999px;width:101px;height:32px;border:1px solid #ccc;border-radius:3px"></div>
<svg class="abs" style="left:465px;top:1000px;" width="34" height="30" viewBox="0 0 34 30"><path d="M1 1 H33 V14 C28 20 10 26 4 30 V1Z" fill="#62b03f"/><circle cx="17" cy="19" r="9" fill="#fff"/><path d="M11 19 H23 A6 6 0 1 0 21.2 23.2" stroke="#111" stroke-width="2.6" fill="none"/></svg>
<div class="t" style="left:509.5px;top:1000.00px;font-size:11px;line-height:12px;color:#111;font-weight:bold;">TRUSTe</div>
<div class="t" style="left:502px;top:1010.50px;font-size:8.5px;line-height:10px;color:#333;font-weight:normal;">Verified Privacy</div>
<div class="t" style="left:505px;top:1021.00px;font-size:5.5px;line-height:8px;color:#333;font-weight:normal;">Powered by TrustArc</div>
<svg class="abs" style="left:586px;top:996px;" width="28" height="38" viewBox="0 0 28 38"><path d="M8 12 V9 A6 6 0 0 1 20 9 V12" stroke="#b5232d" stroke-width="4" fill="none"/><circle cx="14" cy="23" r="11" fill="#b5232d"/><circle cx="14" cy="23" r="6.5" stroke="#fff" stroke-width="2" fill="none"/><rect x="14" y="19" width="8" height="8" fill="#b5232d"/></svg>
<div class="t" style="left:616px;top:1006.00px;font-size:14px;line-height:16px;color:#b5232d;font-weight:bold;letter-spacing:0.5px;font-style:italic">COMODO</div>
<div class="t" style="left:617.5px;top:1019.00px;font-size:6.2px;line-height:8px;color:#333;font-weight:normal;">SSL CERTIFICATE</div>
<div class="t" style="left:314.5px;top:1044.00px;font-size:12.7px;line-height:20px;color:#7c828a;font-weight:normal;">©2025 Answers4College, LLC. All Rights Reserved.</div>

<div class="abs" style="left:17px;top:0;width:1886px;height:1080px;border:1px solid rgba(255,255,255,.2);border-radius:11px;pointer-events:none"></div>
</div>
<div class="abs" style="left:297px;top:1020px;width:1606px;height:60px;background:linear-gradient(rgba(0,0,0,0),rgba(0,0,0,.12));z-index:40"></div>
<div id="hole"></div>
</body></html>
